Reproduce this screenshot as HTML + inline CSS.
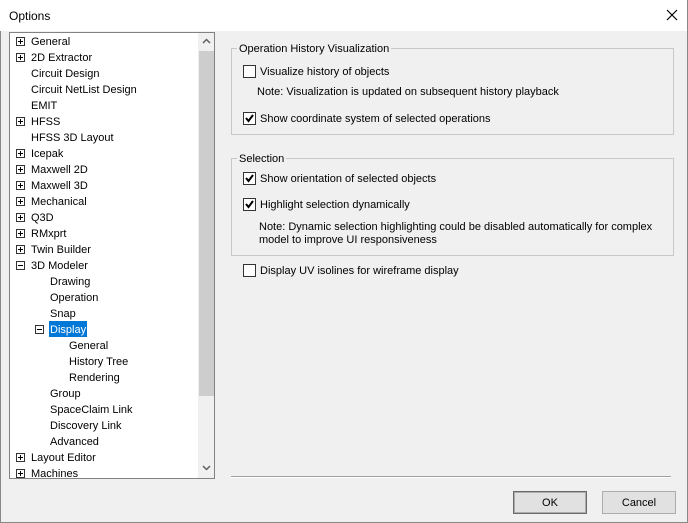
<!DOCTYPE html>
<html><head><style>
*{margin:0;padding:0;box-sizing:border-box}
body{width:688px;height:523px;position:relative;background:#f0f0f0;font-family:"Liberation Sans",sans-serif;font-size:11px;color:#000;overflow:hidden}
.a{position:absolute;white-space:nowrap}
#title{left:0;top:0;width:688px;height:31px;background:#fff}
#tree{left:9px;top:32px;width:206px;height:447px;background:#fff;border:1px solid #828282;overflow:hidden}
.r{position:absolute;height:16px;line-height:18px}
.pb{position:absolute;width:9px;height:9px;border:1px solid #333;background:#fff}
.pb:before{content:"";position:absolute;left:1px;top:3px;width:5px;height:1px;background:#000}
.pb.p:after{content:"";position:absolute;left:3px;top:1px;width:1px;height:5px;background:#000}
.grp{position:absolute;border:1px solid #c8c8c8}
.gl{position:absolute;background:#f0f0f0;padding:0 2px;line-height:14px}
.cb{position:absolute;width:13px;height:13px;border:1px solid #333;background:#fff}
.btn{position:absolute;height:23px;border:1px solid #adadad;background:#e1e1e1;text-align:center;line-height:21px}
.t{position:absolute;white-space:nowrap;line-height:14px}
</style></head><body>
<div class="a" id="title"></div>
<div class="a" style="left:9px;top:9px;font-size:12px">Options</div>
<svg class="a" style="left:666px;top:9px" width="12" height="12"><path d="M1 1L11 11M11 1L1 11" stroke="#000" stroke-width="1.2"/></svg>
<div class="a" style="left:687px;top:0;width:1px;height:523px;background:#888"></div>
<div class="a" style="left:0;top:522px;width:688px;height:1px;background:#888"></div>
<div class="a" style="left:0;top:31px;width:1px;height:492px;background:#888"></div>

<div class="a" id="tree">
<div class="a" style="left:188px;top:0;width:17px;height:445px;background:#f0f0f0"></div>
<div class="a" style="left:189px;top:18px;width:15px;height:345px;background:#cdcdcd"></div>
<svg class="a" style="left:192px;top:5px" width="9" height="6"><path d="M1 5L4.5 1.5L8 5" stroke="#606060" stroke-width="1.5" fill="none"/></svg>
<svg class="a" style="left:192px;top:432px" width="9" height="6"><path d="M1 1L4.5 4.5L8 1" stroke="#606060" stroke-width="1.5" fill="none"/></svg>
</div>
<div class="a" style="left:10px;top:33px;width:188px;height:446px;overflow:hidden">
<div class="pb p" style="left:6px;top:4px"></div><div class="r" style="left:21px;top:0">General</div>
<div class="pb p" style="left:6px;top:20px"></div><div class="r" style="left:21px;top:16px">2D Extractor</div>
<div class="r" style="left:21px;top:32px">Circuit Design</div>
<div class="r" style="left:21px;top:48px">Circuit NetList Design</div>
<div class="r" style="left:21px;top:64px">EMIT</div>
<div class="pb p" style="left:6px;top:84px"></div><div class="r" style="left:21px;top:80px">HFSS</div>
<div class="r" style="left:21px;top:96px">HFSS 3D Layout</div>
<div class="pb p" style="left:6px;top:116px"></div><div class="r" style="left:21px;top:112px">Icepak</div>
<div class="pb p" style="left:6px;top:132px"></div><div class="r" style="left:21px;top:128px">Maxwell 2D</div>
<div class="pb p" style="left:6px;top:148px"></div><div class="r" style="left:21px;top:144px">Maxwell 3D</div>
<div class="pb p" style="left:6px;top:164px"></div><div class="r" style="left:21px;top:160px">Mechanical</div>
<div class="pb p" style="left:6px;top:180px"></div><div class="r" style="left:21px;top:176px">Q3D</div>
<div class="pb p" style="left:6px;top:196px"></div><div class="r" style="left:21px;top:192px">RMxprt</div>
<div class="pb p" style="left:6px;top:212px"></div><div class="r" style="left:21px;top:208px">Twin Builder</div>
<div class="pb" style="left:6px;top:228px"></div><div class="r" style="left:21px;top:224px">3D Modeler</div>
<div class="r" style="left:40px;top:240px">Drawing</div>
<div class="r" style="left:40px;top:256px">Operation</div>
<div class="r" style="left:40px;top:272px">Snap</div>
<div class="pb" style="left:25px;top:292px"></div><div class="r" style="left:39px;top:288px;background:#0078d7;color:#fff;padding:0 1px">Display</div>
<div class="r" style="left:59px;top:304px">General</div>
<div class="r" style="left:59px;top:320px">History Tree</div>
<div class="r" style="left:59px;top:336px">Rendering</div>
<div class="r" style="left:40px;top:352px">Group</div>
<div class="r" style="left:40px;top:368px">SpaceClaim Link</div>
<div class="r" style="left:40px;top:384px">Discovery Link</div>
<div class="r" style="left:40px;top:400px">Advanced</div>
<div class="pb p" style="left:6px;top:420px"></div><div class="r" style="left:21px;top:416px">Layout Editor</div>
<div class="pb p" style="left:6px;top:436px"></div><div class="r" style="left:21px;top:432px">Machines</div>
</div>

<div class="grp" style="left:231px;top:48px;width:443px;height:87px"></div>
<div class="gl a" style="left:237px;top:42px">Operation History Visualization</div>
<div class="cb" style="left:243px;top:65px"></div>
<div class="t" style="left:260px;top:65px">Visualize history of objects</div>
<div class="t" style="left:257px;top:85px">Note: Visualization is updated on subsequent history playback</div>
<div class="cb" style="left:243px;top:112px"><svg width="11" height="11" style="position:absolute;left:0;top:0"><path d="M2 5L4.5 8L9 2" stroke="#000" stroke-width="2" fill="none"/></svg></div>
<div class="t" style="left:260px;top:112px">Show coordinate system of selected operations</div>

<div class="grp" style="left:231px;top:158px;width:443px;height:98px"></div>
<div class="gl a" style="left:237px;top:152px">Selection</div>
<div class="cb" style="left:243px;top:172px"><svg width="11" height="11" style="position:absolute;left:0;top:0"><path d="M2 5L4.5 8L9 2" stroke="#000" stroke-width="2" fill="none"/></svg></div>
<div class="t" style="left:260px;top:172px">Show orientation of selected objects</div>
<div class="cb" style="left:243px;top:198px"><svg width="11" height="11" style="position:absolute;left:0;top:0"><path d="M2 5L4.5 8L9 2" stroke="#000" stroke-width="2" fill="none"/></svg></div>
<div class="t" style="left:260px;top:198px">Highlight selection dynamically</div>
<div class="t" style="left:259px;top:220px">Note: Dynamic selection highlighting could be disabled automatically for complex</div>
<div class="t" style="left:259px;top:233px">model to improve UI responsiveness</div>
<div class="cb" style="left:243px;top:264px"></div>
<div class="t" style="left:260px;top:264px">Display UV isolines for wireframe display</div>

<div class="a" style="left:231px;top:476px;width:440px;height:1px;background:#a0a0a0"></div>
<div class="a" style="left:231px;top:477px;width:440px;height:1px;background:#fff"></div>
<div class="btn" style="left:513px;top:491px;width:74px;border:1px solid #6a6a6a"><div style="border:1px solid #adadad;height:21px;line-height:20px">OK</div></div>
<div class="btn" style="left:602px;top:491px;width:74px;line-height:22px">Cancel</div>
</body></html>
